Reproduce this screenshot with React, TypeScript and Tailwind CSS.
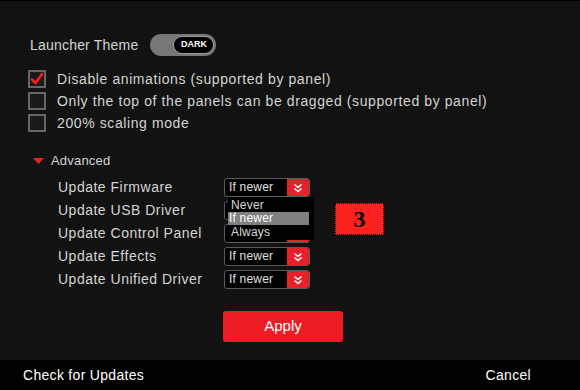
import { useState } from "react";

const font = { fontFamily: '"Liberation Sans", Arial, sans-serif' };

const DoubleChevron = () => (
  <svg width="10" height="10" viewBox="0 0 10 10" fill="none" stroke="#fff" strokeWidth="1.6">
    <path d="M1.5 1.5 L5 4.5 L8.5 1.5" />
    <path d="M1.5 5.5 L5 8.5 L8.5 5.5" />
  </svg>
);

const Select = ({ value }: { value: string }) => (
  <div className="flex h-[19px] w-[86px] items-stretch overflow-hidden rounded-[3px] border border-[#5a5a5a] bg-black">
    <span className="flex-1 pl-[4px] text-[12px] leading-[17px] tracking-[0.2px] text-[#e0e0e0]">{value}</span>
    <span className="flex w-[22px] items-center justify-center bg-[#e8202a]">
      <DoubleChevron />
    </span>
  </div>
);

const Checkbox = ({ checked, label }: { checked: boolean; label: string }) => (
  <div className="flex h-[18px] items-center gap-[11px]">
    <div className="flex h-[18px] w-[18px] items-center justify-center border-2 border-[#666] bg-[#1a1a1a]">
      {checked && (
        <svg width="14" height="14" viewBox="0 0 14 14" fill="none" stroke="#ff1a1a" strokeWidth="2.6" strokeLinecap="round" strokeLinejoin="round">
          <path d="M2 7.5 L5.5 11 L12 2" />
        </svg>
      )}
    </div>
    <span className="text-[14px] tracking-[0.6px] text-[#d4d4d4]">{label}</span>
  </div>
);

export default function App() {
  const [checks] = useState([true, false, false]);
  const updates = [
    "Update Firmware",
    "Update USB Driver",
    "Update Control Panel",
    "Update Effects",
    "Update Unified Driver",
  ];

  return (
    <div className="relative flex h-[390px] w-[580px] flex-col border-t border-black bg-[#121212]" style={font}>
      <div className="flex flex-1 flex-col pl-[28px] pt-[33px]">
        {/* 테마 */}
        <div className="flex h-[22px] items-center gap-[12px] pl-[2px]">
          <span className="text-[14px] tracking-[0.2px] text-[#d4d4d4]">Launcher Theme</span>
          <div className="flex h-[22px] w-[66px] items-center justify-end rounded-full bg-[#777] pr-[2px]">
            <div className="flex h-[18px] w-[41px] items-center justify-center rounded-full border border-[#999] bg-black text-[9px] font-bold text-white">
              DARK
            </div>
          </div>
        </div>

        {/* 체크박스 */}
        <div className="mt-[14px] flex flex-col gap-[4px]">
          <Checkbox checked={checks[0]} label="Disable animations (supported by panel)" />
          <Checkbox checked={checks[1]} label="Only the top of the panels can be dragged (supported by panel)" />
          <Checkbox checked={checks[2]} label="200% scaling mode" />
        </div>

        {/* 고급 */}
        <div className="mt-[21px] flex h-[16px] items-center gap-[7px] pl-[5px]">
          <svg width="11" height="6" viewBox="0 0 11 6">
            <path d="M0 0 L11 0 L5.5 6 Z" fill="#e8202a" />
          </svg>
          <span className="text-[13px] tracking-[0.2px] text-[#d4d4d4]">Advanced</span>
        </div>

        <div className="mt-[9px] flex flex-col gap-[4px] pl-[30px]">
          {updates.map((u) => (
            <div key={u} className="flex h-[19px] items-center">
              <span className="w-[166px] text-[14px] tracking-[0.5px] text-[#d4d4d4]">{u}</span>
              <Select value="If newer" />
            </div>
          ))}
        </div>

        <button className="ml-[195px] mt-[22px] h-[31px] w-[120px] rounded-[3px] bg-[#ed1c24] text-[15px] text-white">
          Apply
        </button>
      </div>

      {/* 하단 */}
      <div className="flex h-[30px] items-center justify-between bg-black pl-[23px] pr-[49px] text-[14px] tracking-[0.3px] text-white">
        <span>Check for Updates</span>
        <span>Cancel</span>
      </div>

      {/* 드롭다운 */}
      <div className="absolute left-[228px] top-[196px] flex w-[86px] flex-col bg-black py-[1px] text-[12px] tracking-[0.2px] text-[#d8d8d8]">
        <span className="h-[14px] pl-[3px] leading-[14px]">Never</span>
        <span className="mr-[5px] h-[13px] bg-[#808080] pl-[1px] leading-[13px] text-white">If newer</span>
        <span className="h-[14px] pl-[3px] leading-[14px]">Always</span>
      </div>

      <div className="absolute left-[335px] top-[202px] flex h-[32px] w-[49px] items-center justify-center border border-dotted border-[#111] bg-[#ff2020] text-[24px] font-bold text-black" style={{ fontFamily: '"Liberation Serif", serif' }}>
        3
      </div>
    </div>
  );
}
